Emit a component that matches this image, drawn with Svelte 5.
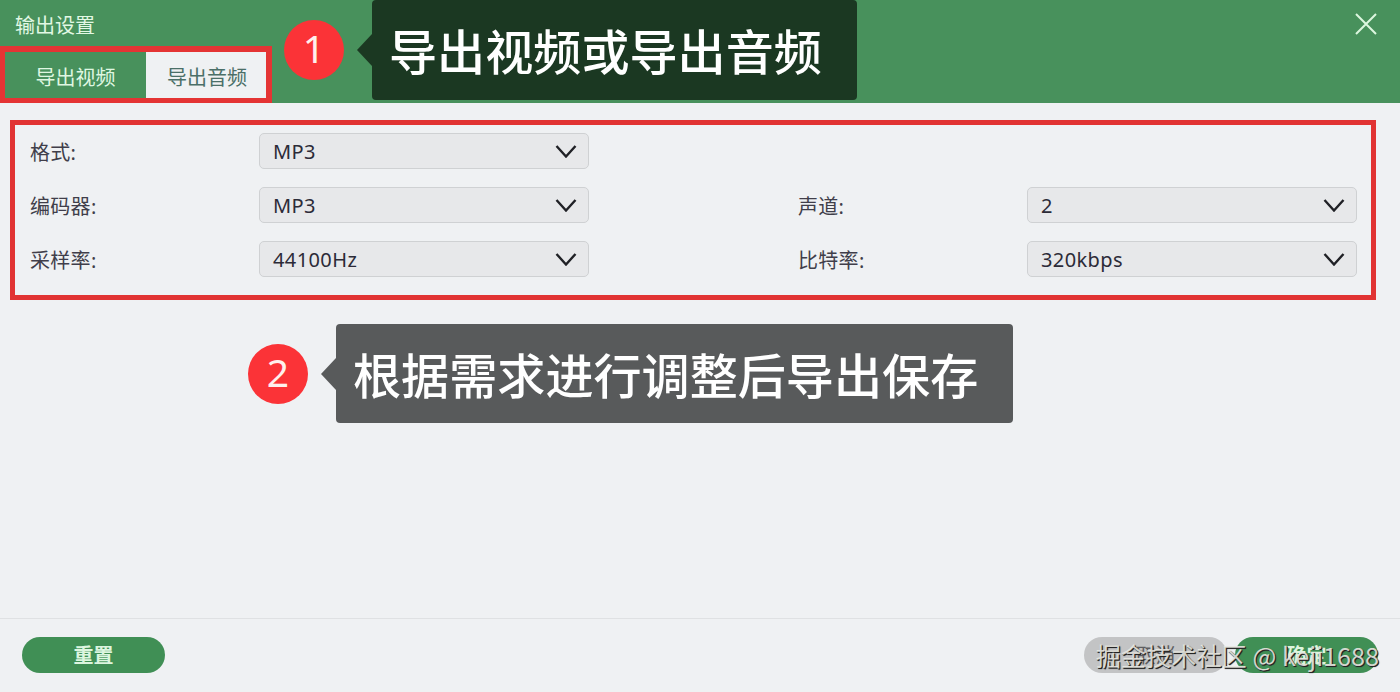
<script lang="ts">
    const tabs = ['导出视频', '导出音频'];
    let active = $state(1);

    const fields = [
        { label: '格式:', value: 'MP3' },
        null,
        { label: '编码器:', value: 'MP3' },
        { label: '声道:', value: '2' },
        { label: '采样率:', value: '44100Hz' },
        { label: '比特率:', value: '320kbps' },
    ];
</script>

<div class="dialog">
    <header>
        <div class="title-bar">
            <span class="title">输出设置</span>
            <button class="close" aria-label="关闭">
                <svg width="24" height="24" viewBox="0 0 24 24">
                    <path d="M2 2 L22 22 M22 2 L2 22" />
                </svg>
            </button>
        </div>
        <div class="tabs">
            {#each tabs as tab, i}
                <button class="tab" class:active={active === i} onclick={() => (active = i)}>{tab}</button>
            {/each}
        </div>
    </header>

    <main>
        <div class="panel">
            {#each fields as field}
                {#if field}
                    <div class="field">
                        <span class="label">{field.label}</span>
                        <div class="select">
                            <span>{field.value}</span>
                            <svg width="22" height="14" viewBox="0 0 22 14">
                                <path d="M1.5 2 L11 12.5 L20.5 2" />
                            </svg>
                        </div>
                    </div>
                {:else}
                    <div></div>
                {/if}
            {/each}
        </div>
    </main>

    <footer>
        <button class="pill">重置</button>
        <div class="actions">
            <button class="pill cancel">取消</button>
            <button class="pill">确定</button>
        </div>
    </footer>

    <div class="step step-one">
        <span class="badge">1</span>
        <div class="callout dark">导出视频或导出音频</div>
    </div>
    <div class="step step-two">
        <span class="badge">2</span>
        <div class="callout">根据需求进行调整后导出保存</div>
    </div>
    <div class="watermark">掘金技术社区 @ keji1688</div>
</div>

<style>
:global(body) {
    margin: 0;
}
.dialog {
    position: relative;
    display: flex;
    flex-direction: column;
    width: 1400px;
    height: 692px;
    overflow: hidden;
    background: #eff1f3;
    color: #2c2b38;
    font-family: "Noto Sans", "Noto Sans CJK SC", sans-serif;
    font-size: 20px;
}
button {
    padding: 0;
    border: 0;
    background: none;
    font: inherit;
    color: inherit;
}
header {
    display: flex;
    flex-direction: column;
    height: 103px;
    background: #48915c;
}
.title-bar {
    display: flex;
    justify-content: space-between;
    align-items: center;
    box-sizing: border-box;
    height: 46px;
    padding: 2px 22px 0 15px;
    color: #e2f8e4;
}
.title {
    padding-top: 4px;
    line-height: 40px;
}
.close {
    display: flex;
}
.close path {
    stroke: #dcf7df;
    stroke-width: 2;
    fill: none;
}
.tabs {
    display: flex;
    box-sizing: border-box;
    width: 272px;
    height: 57px;
    border: 6px solid #e43434;
    border-left-width: 5px;
    border-bottom-width: 5px;
}
.tab {
    box-sizing: border-box;
    width: 141px;
    height: 46px;
    padding-top: 6px;
    line-height: 40px;
    color: #dff7e1;
}
.tab.active {
    width: 120px;
    padding-left: 2px;
    background: #eff1f3;
    color: #4b6f68;
}
main {
    flex: 1;
    padding: 17px 24px 0 10px;
}
.panel {
    display: grid;
    grid-template-columns: 768px 560px;
    grid-auto-rows: 36px;
    row-gap: 18px;
    box-sizing: border-box;
    height: 180px;
    padding: 8px 0 0 15px;
    border: 5px solid #e13333;
}
.field {
    display: flex;
    align-items: center;
}
.label {
    width: 229px;
    color: #403e4a;
    letter-spacing: 0.3px;
}
.select {
    display: flex;
    justify-content: space-between;
    align-items: center;
    box-sizing: border-box;
    width: 330px;
    height: 36px;
    padding: 0 11px 0 13px;
    border: 1px solid #cfd1d3;
    border-radius: 5px;
    background: #e7e8ea;
    letter-spacing: 0.4px;
}
.select path {
    stroke: #202126;
    stroke-width: 2.4;
    fill: none;
}
footer {
    display: flex;
    justify-content: space-between;
    align-items: center;
    box-sizing: border-box;
    height: 74px;
    padding: 0 22px 2px;
    border-top: 1px solid #dfe1e3;
}
.actions {
    display: flex;
    gap: 8px;
}
.pill {
    width: 143px;
    height: 36px;
    border-radius: 18px;
    background: #408f55;
    color: #dcf5df;
    font-weight: 700;
}
.pill.cancel {
    background: #c3c4c5;
    color: #5d5d61;
    font-weight: 400;
}
.step {
    position: absolute;
    display: flex;
    align-items: center;
    gap: 28px;
}
.step-one {
    left: 284px;
    top: 0;
}
.step-two {
    left: 248px;
    top: 324px;
}
.badge {
    width: 60px;
    height: 60px;
    border-radius: 50%;
    background: #fb3337;
    color: #fff0ed;
    font-size: 39px;
    line-height: 55px;
    text-align: center;
}
.callout {
    position: relative;
    height: 99px;
    padding: 0 35px 0 17px;
    border-radius: 4px;
    background: #585a5b;
    color: #fff;
    font-size: 48.1px;
    font-weight: 500;
    line-height: 103px;
    white-space: nowrap;
}
.callout.dark {
    height: 100px;
    background: #1b3822;
}
/* arrow towards the step number */
.callout::before {
    content: "";
    position: absolute;
    left: -15px;
    top: 34px;
    width: 15px;
    height: 32px;
    background: inherit;
    clip-path: polygon(0 50%, 100% 0, 100% 100%);
}
.watermark {
    position: absolute;
    right: 21px;
    top: 637px;
    color: rgba(235, 235, 228, 0.88);
    font-family: "Noto Sans CJK SC", sans-serif;
    font-size: 25.2px;
    line-height: 36px;
    white-space: nowrap;
    text-shadow: 1px 1px 1px #222, 1px 1px 0 #333;
}
</style>
